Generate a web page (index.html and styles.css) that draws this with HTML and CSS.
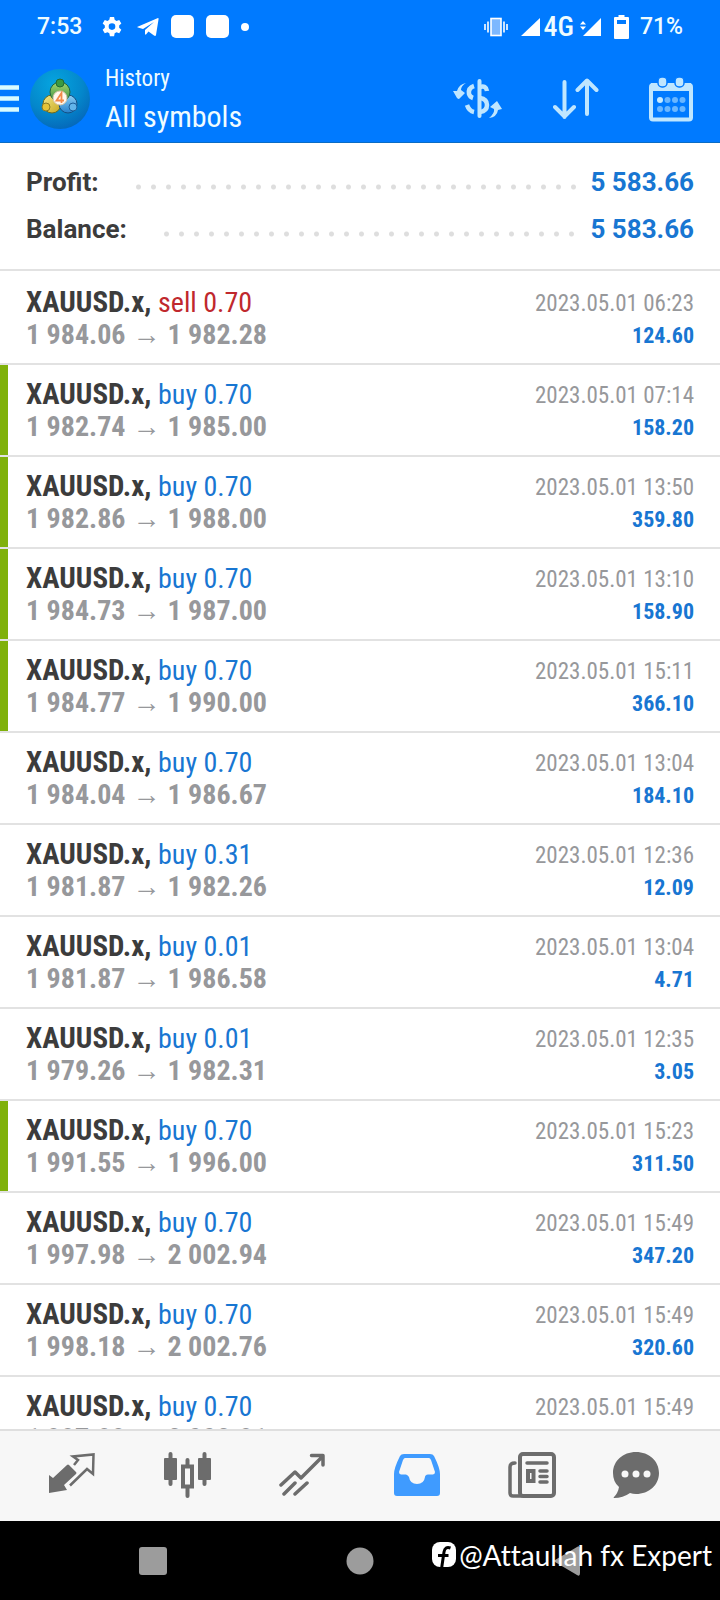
FILE: index.html
```html
<!DOCTYPE html>
<html lang="en">
<head>
<meta charset="utf-8">
<meta name="viewport" content="width=device-width, initial-scale=1">
<title>History</title>
<link rel="stylesheet" href="styles.css">
</head>
<body>
<div class="app">
  <header class="top">
    <div class="status">
      <div class="status-left">
        <span class="clock">7:53</span>
        <svg width="20" height="20" viewBox="0 0 24 24" fill="#fff"><path fill-rule="evenodd" d="M9.5 0h5l.7 3.4 2.2 1.3 3.3-1.2 2.5 4.3-2.6 2.4v2.6l2.6 2.4-2.5 4.3-3.3-1.2-2.2 1.3-.7 3.4h-5l-.7-3.4-2.2-1.3-3.3 1.2L.8 15.200l2.600-2.400v-2.600L.8 7.800l2.500-4.300 3.300 1.200 2.200-1.300zM12 7.500a4 4 0 1 0 0 8 4 4 0 0 0 0-8z"/></svg>
        <svg width="22" height="20" viewBox="0 0 22 20" fill="#fff"><path d="M0 10 21 1Q22 1 21.500 2.500L19 18Q18.500 19.500 17 18.500L11.500 14.500 9 17.500 8 17.500V13L17 5 6 12 1 10.500z"/></svg>
        <span class="app-tile"></span>
        <span class="app-tile"></span>
        <span class="more-dot"></span>
      </div>
      <div class="status-right">
        <svg class="vibrate" width="24" height="20" viewBox="0 0 24 20"><path d="M1 7v6M4 4.500v11M20 4.500v11M23 7v6" stroke="#fff" stroke-width="1.600"/><rect x="7" y="1.500" width="10" height="17" fill="#7db8ff" stroke="#fff" stroke-width="1.600"/></svg>
        <svg width="20" height="18" viewBox="0 0 20 18"><path d="M0 18 19 0V18z" fill="#fff"/></svg>
        <span class="network">4G</span>
        <svg class="signal" width="22" height="18" viewBox="0 0 22 18"><path d="M3 18 21 0V18zM0 6.500 3 3 6 6.500zM0 8.500 3 12 6 8.500z" fill="#fff"/></svg>
        <svg class="battery" width="15" height="24" viewBox="0 0 15 24"><path fill-rule="evenodd" fill="#fff" d="M4.500 0h6v2H14q1 0 1 1v20q0 1-1 1H1q-1 0-1-1V3q0-1 1-1h3.500zM3 5v4h9V5z"/></svg>
        <span class="percent">71%</span>
      </div>
    </div>
    <div class="toolbar">
      <button class="menu" aria-label="Open menu"><svg width="19" height="28" viewBox="0 0 19 28"><path d="M0 2.500h19M0 13.500h19M0 24.500h19" stroke="#d9fbff" stroke-width="4.500"/></svg></button>
      <svg class="avatar" width="60" height="60" viewBox="0 0 60 60">
        <defs>
          <radialGradient id="sky" cx=".4" cy=".25" r=".8"><stop offset="0" stop-color="#05a5e0"/><stop offset=".6" stop-color="#0487cb"/><stop offset="1" stop-color="#0565b8"/></radialGradient>
          <linearGradient id="leaf" x2="0" y2="1"><stop offset="0" stop-color="#a7d86c"/><stop offset="1" stop-color="#348d45"/></linearGradient>
          <linearGradient id="gold" x2="1" y2="1"><stop offset="0" stop-color="#f3ea8a"/><stop offset="1" stop-color="#c7a51d"/></linearGradient>
          <linearGradient id="blue" x2="0" y2="1"><stop offset="0" stop-color="#8ed0f5"/><stop offset="1" stop-color="#2480cc"/></linearGradient>
        </defs>
        <circle cx="30" cy="30" r="30" fill="url(#sky)"/>
        <g stroke-width="1">
          <circle cx="22" cy="35" r="9" fill="url(#gold)" stroke="#716b1b"/>
          <circle cx="38" cy="35" r="9" fill="url(#blue)" stroke="#174f82"/>
          <circle cx="30" cy="23" r="10" fill="url(#leaf)" stroke="#26663b"/>
          <circle cx="30" cy="14" r="4" fill="#3b9a42" stroke="#226a35"/>
          <circle cx="16" cy="38" r="4" fill="#e3c338" stroke="#8c7b24"/>
          <circle cx="43" cy="38" r="4" fill="#62b4ea" stroke="#1c5d99"/>
        </g>
        <circle cx="30" cy="29" r="7" fill="#fff8ee" stroke="#d4c4a8"/>
        <path d="M31.500 34V24L26.500 31.500H34" fill="none" stroke="#f28a4a" stroke-width="1.800"/>
      </svg>
      <div class="titles">
        <span class="subtitle">History</span>
        <h1>All symbols</h1>
      </div>
      <div class="actions">
        <button aria-label="Symbol"><svg width="50" height="42" viewBox="0 0 50 42"><g fill="none" stroke="#bfe6ff"><path d="M26.500 3V38" stroke-width="4" stroke-linecap="round"/><path d="M21 8Q15 10 16 16 17 19 20 20M14 27Q16 33 21 34" stroke-width="4.500"/><path d="M27 9Q33 7 34 13M27 20Q34 21 34 27 34 33 27 34" stroke-width="4.500"/></g><path d="M13 5Q8 8 8 12L12 15 6 21Q5 21 4 20L0 13 4 13Q6 6 13 5zM36 40Q42 35 41 31L37 29 44 23 49 31 45 32Q44 39 36 40z" fill="#bfe6ff"/></svg></button>
        <button aria-label="Sort"><svg width="46" height="42" viewBox="0 0 46 42"><path d="M11.500 4V39M2 29 11.500 38.500 21 29M34 36V3M24.500 12 34 2.500 43.500 12" fill="none" stroke="#bfe6ff" stroke-width="4" stroke-linecap="round" stroke-linejoin="round"/></svg></button>
        <button aria-label="Period"><svg width="44" height="46" viewBox="0 0 44 46"><rect x="2" y="9" width="40" height="34.500" rx="2" fill="none" stroke="#bfe6ff" stroke-width="4"/><path d="M2 11h40" stroke="#bfe6ff" stroke-width="8"/><rect x="9" y="1" width="9" height="10" rx="4" fill="#bfe6ff" stroke="#007aff" stroke-width="1.500"/><rect x="26" y="1" width="9" height="10" rx="4" fill="#bfe6ff" stroke="#007aff" stroke-width="1.500"/><g fill="#6ab6ff"><circle cx="18.500" cy="24" r="3"/><circle cx="26" cy="24" r="3"/><circle cx="33.500" cy="24" r="3"/><circle cx="11" cy="33" r="3"/><circle cx="18.500" cy="33" r="3"/><circle cx="26" cy="33" r="3"/><circle cx="33.500" cy="33" r="3"/></g><circle cx="11" cy="24" r="3" fill="#c8ebff"/></svg></button>
      </div>
    </div>
  </header>

  <main class="content">
    <dl class="summary">
      <div class="sum-row"><dt>Profit:</dt><dd>5 583.66</dd></div>
      <div class="sum-row"><dt>Balance:</dt><dd>5 583.66</dd></div>
    </dl>
    <ul class="deals">
      <li class="deal"><div class="info"><p class="name">XAUUSD.x, <span class="sell">sell 0.70</span></p><p class="price">1 984.06<span class="arrow">→</span>1 982.28</p></div><div class="result"><time>2023.05.01 06:23</time><strong>124.60</strong></div></li>
      <li class="deal tp"><div class="info"><p class="name">XAUUSD.x, <span class="buy">buy 0.70</span></p><p class="price">1 982.74<span class="arrow">→</span>1 985.00</p></div><div class="result"><time>2023.05.01 07:14</time><strong>158.20</strong></div></li>
      <li class="deal tp"><div class="info"><p class="name">XAUUSD.x, <span class="buy">buy 0.70</span></p><p class="price">1 982.86<span class="arrow">→</span>1 988.00</p></div><div class="result"><time>2023.05.01 13:50</time><strong>359.80</strong></div></li>
      <li class="deal tp"><div class="info"><p class="name">XAUUSD.x, <span class="buy">buy 0.70</span></p><p class="price">1 984.73<span class="arrow">→</span>1 987.00</p></div><div class="result"><time>2023.05.01 13:10</time><strong>158.90</strong></div></li>
      <li class="deal tp"><div class="info"><p class="name">XAUUSD.x, <span class="buy">buy 0.70</span></p><p class="price">1 984.77<span class="arrow">→</span>1 990.00</p></div><div class="result"><time>2023.05.01 15:11</time><strong>366.10</strong></div></li>
      <li class="deal"><div class="info"><p class="name">XAUUSD.x, <span class="buy">buy 0.70</span></p><p class="price">1 984.04<span class="arrow">→</span>1 986.67</p></div><div class="result"><time>2023.05.01 13:04</time><strong>184.10</strong></div></li>
      <li class="deal"><div class="info"><p class="name">XAUUSD.x, <span class="buy">buy 0.31</span></p><p class="price">1 981.87<span class="arrow">→</span>1 982.26</p></div><div class="result"><time>2023.05.01 12:36</time><strong>12.09</strong></div></li>
      <li class="deal"><div class="info"><p class="name">XAUUSD.x, <span class="buy">buy 0.01</span></p><p class="price">1 981.87<span class="arrow">→</span>1 986.58</p></div><div class="result"><time>2023.05.01 13:04</time><strong>4.71</strong></div></li>
      <li class="deal"><div class="info"><p class="name">XAUUSD.x, <span class="buy">buy 0.01</span></p><p class="price">1 979.26<span class="arrow">→</span>1 982.31</p></div><div class="result"><time>2023.05.01 12:35</time><strong>3.05</strong></div></li>
      <li class="deal tp"><div class="info"><p class="name">XAUUSD.x, <span class="buy">buy 0.70</span></p><p class="price">1 991.55<span class="arrow">→</span>1 996.00</p></div><div class="result"><time>2023.05.01 15:23</time><strong>311.50</strong></div></li>
      <li class="deal"><div class="info"><p class="name">XAUUSD.x, <span class="buy">buy 0.70</span></p><p class="price">1 997.98<span class="arrow">→</span>2 002.94</p></div><div class="result"><time>2023.05.01 15:49</time><strong>347.20</strong></div></li>
      <li class="deal"><div class="info"><p class="name">XAUUSD.x, <span class="buy">buy 0.70</span></p><p class="price">1 998.18<span class="arrow">→</span>2 002.76</p></div><div class="result"><time>2023.05.01 15:49</time><strong>320.60</strong></div></li>
      <li class="deal"><div class="info"><p class="name">XAUUSD.x, <span class="buy">buy 0.70</span></p><p class="price">1 997.98<span class="arrow">→</span>2 002.81</p></div><div class="result"><time>2023.05.01 15:49</time></div></li>
    </ul>
  </main>

  <nav class="tabs">
    <button aria-label="Quotes"><svg width="46" height="46" viewBox="0 0 46 46"><path d="M0 23 4 26 18 13Q19 12 20 13L27 20Q28 21 27 22L15 33 18 38 0 41z" fill="#6c6c6c"/><path d="M25 13 29 8 24 4.500 44.500 2.500 44 22 38 17 21 33.500" fill="none" stroke="#6c6c6c" stroke-width="2.500" stroke-linejoin="miter"/></svg></button>
    <button aria-label="Charts"><svg width="48" height="48" viewBox="0 0 48 48"><g fill="#6c6c6c"><rect x="1" y="7" width="13" height="22" rx="1"/><rect x="5.500" y="1" width="4" height="34" rx="2"/><rect x="35" y="7" width="13" height="22" rx="1"/><rect x="39.500" y="1" width="4" height="34" rx="2"/><rect x="22.500" y="7" width="4" height="10" rx="2"/><rect x="22.500" y="34" width="4" height="13" rx="2"/></g><rect x="20" y="15.500" width="9" height="20" fill="none" stroke="#6c6c6c" stroke-width="4"/></svg></button>
    <button aria-label="Trade"><svg width="46" height="46" viewBox="0 0 46 46"><path d="M2 33 16 20 22 26 43 5M32.500 3.500H44V13M5 42 16 31M16 42 28 31" fill="none" stroke="#6c6c6c" stroke-width="3.500" stroke-linecap="round" stroke-linejoin="round"/></svg></button>
    <button aria-label="History" aria-current="page"><svg width="46" height="46" viewBox="0 0 46 46"><path fill-rule="evenodd" fill="#3f9bff" d="M10 2H36Q39 2 40 4 46 16 46 22V41Q46 44 43 44H3Q0 44 0 41V22Q0 16 6 4 7 2 10 2zM11 6Q10 6 9 8L5 20Q5 22 7 22.500H12Q14 23 15 25 16 32 23 32 30 32 31 25 31 23 34 22.500H39Q41 22 41 20L37 8Q36 6 35 6z"/></svg></button>
    <button aria-label="News"><svg width="48" height="48" viewBox="0 0 48 48"><g fill="none" stroke="#6c6c6c" stroke-width="4"><rect x="12" y="3" width="34" height="42" rx="3"/><path d="M7 12Q2 12 2 16V42Q2 45 5 45H14M19 12H39M32 20H39M32 25.500H39M32 31H39" stroke-linecap="round" stroke-width="3.500"/><rect x="20" y="20" width="5.500" height="10"/></g></svg></button>
    <button aria-label="Messages"><svg width="46" height="48" viewBox="0 0 46 48"><path d="M23 1C36 1 46 10 46 22S36 43 23 43Q20 43 17 42 10 47 1 47 0 47 1 46 5 42 6 36 0 31 0 22C0 10 10 1 23 1z" fill="#6c6c6c"/><g fill="#f7f7f7"><circle cx="12" cy="23" r="3.500"/><circle cx="23" cy="23" r="3.500"/><circle cx="34" cy="23" r="3.500"/></g></svg></button>
  </nav>

  <footer class="system">
    <button aria-label="Recent apps"><svg width="30" height="30" viewBox="0 0 30 30"><rect x="1" y="1" width="28" height="28" rx="3" fill="#9c9c9c"/></svg></button>
    <button aria-label="Home"><svg width="30" height="30" viewBox="0 0 30 30"><circle cx="15" cy="15" r="13.500" fill="#9c9c9c"/></svg></button>
    <button aria-label="Back"><svg width="30" height="32" viewBox="0 0 30 32"><path d="M3 15 25 2Q28 0 28 4V28Q28 32 25 30L3 17Q1 16 3 15z" fill="#9c9c9c"/></svg></button>
    <div class="credit">
      <svg width="26" height="28" viewBox="0 0 26 28"><rect x="1" y="1" width="24" height="25" rx="8" fill="#fff"/><path d="M19.500 7Q14 5 13 11L10.500 28M7 14.500H17.500" fill="none" stroke="#000" stroke-width="3"/></svg>
      <span>@Attaullah fx Expert</span>
    </div>
  </footer>
</div>
</body>
</html>
```
FILE: styles.css
```css
* { box-sizing: border-box; }

body {
  margin: 0;
  font-family: "Roboto Condensed", Roboto, sans-serif;
  color: #3c3c3c;
  background: #fff;
}

p, h1, dl, dd, ul { margin: 0; padding: 0; }

button {
  display: flex;
  align-items: center;
  justify-content: center;
  padding: 0;
  border: 0;
  background: none;
}

svg { display: block; flex: none; }

.app {
  display: flex;
  flex-direction: column;
  height: 100vh;
}

.top {
  color: #effcff;
  background: #007aff;
  border-bottom: 1px solid #0a6cc4;
}

.status {
  display: flex;
  justify-content: space-between;
  align-items: center;
  height: 53px;
  padding: 0 37px;
  font: 500 23px/28px Roboto, sans-serif;
}

.status-left, .status-right { display: flex; align-items: center; }
.status-left { gap: 12px; }
.clock { margin-right: 8px; }
.status-left svg + svg { margin-left: 3px; }

.app-tile {
  width: 23px;
  height: 23px;
  border-radius: 5px;
  background: #fff;
}

.more-dot {
  width: 8px;
  height: 8px;
  border-radius: 50%;
  background: #fff;
}

.vibrate { margin-right: 13px; }
.network { margin: 0 6px 0 2px; font: 500 28px/28px "Roboto Condensed", sans-serif; }
.battery { margin: 0 11px 0 12px; }

.toolbar {
  display: flex;
  align-items: center;
  height: 89px;
  padding: 3px 27px 0 0;
}

.menu { margin-right: 11px; }
.avatar { margin-right: 15px; }

.titles { flex: 1; }
.subtitle { display: block; font-size: 23px; line-height: 36px; }
h1 { font-size: 30px; font-weight: 400; line-height: 40px; }

.actions { display: flex; align-items: center; gap: 50px; }

.content {
  flex: 1;
  min-height: 0;
  overflow: hidden;
}

.summary {
  padding: 16px 26px;
  border-bottom: 2px solid #e2e2e2;
  font: 700 26px/47px Roboto, sans-serif;
}

.sum-row { display: flex; }

.sum-row dt { flex: 1; display: flex; }

/* dotted leader between label and amount */
.sum-row dt::after {
  content: "";
  flex: 1;
  margin: 0 10px 0 32px;
  background: radial-gradient(circle at 50% 28px, #dedede 2px, transparent 3px) 0 0 / 15px 100% repeat-x;
}

.sum-row dd { color: #1876d2; }

.deals { list-style: none; }

.deal {
  display: flex;
  justify-content: space-between;
  height: 92px;
  padding: 13px 26px 0;
  border-bottom: 2px solid #e2e2e2;
}

.deal:first-child { height: 94px; padding-top: 15px; }
.deal.tp { box-shadow: inset 8px 0 0 #7fb10a; }

.name { font-size: 29px; font-weight: 700; line-height: 32px; }
.name span { font-size: 28px; font-weight: 400; }
.sell { color: #c0282d; }
.buy { color: #1876d2; }

.price {
  font-size: 28px;
  font-weight: 700;
  line-height: 32px;
  color: #97989b;
}

.arrow {
  display: inline-block;
  width: 42px;
  font: 400 28px/28px "Liberation Sans", sans-serif;
  text-align: center;
}

.result {
  display: flex;
  flex-direction: column;
  padding-top: 2px;
  font-size: 22px;
  line-height: 32px;
  text-align: right;
}

.result time { font-size: 23px; color: #97989b; }
.result strong { color: #1876d2; }

.tabs {
  display: grid;
  grid-template-columns: repeat(5, 115fr) 94fr;
  height: 92px;
  padding: 0 37px 2px 14px;
  border-top: 2px solid #dfdfdf;
  background: #f7f7f7;
}

.system {
  position: relative;
  display: grid;
  grid-template-columns: repeat(3, 1fr);
  height: 79px;
  padding: 0 50px;
  background: #000;
}

/* signature laid over the system bar */
.credit {
  position: absolute;
  right: 8px;
  top: 16px;
  display: flex;
  align-items: center;
  gap: 2px;
  color: #fff;
  font: 400 28px/36px Lato, sans-serif;
  font-variant-ligatures: none;
}
```
